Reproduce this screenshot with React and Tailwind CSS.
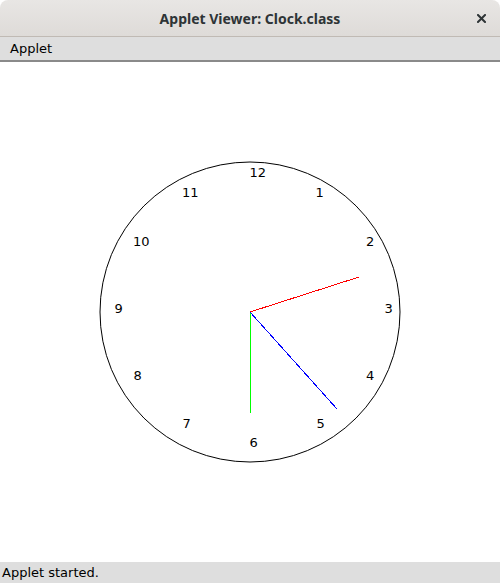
const NUMBERS = [
  { n: '12', x: 249.5, y: 115 },
  { n: '1', x: 315.5, y: 135 },
  { n: '11', x: 182, y: 135 },
  { n: '2', x: 366, y: 184 },
  { n: '10', x: 133, y: 184 },
  { n: '3', x: 384.5, y: 251 },
  { n: '9', x: 114.5, y: 251 },
  { n: '4', x: 366, y: 318 },
  { n: '8', x: 133.5, y: 318 },
  { n: '5', x: 316.5, y: 366 },
  { n: '7', x: 182.5, y: 366 },
  { n: '6', x: 249.5, y: 385 },
]

function ClockFace() {
  return (
    <svg width="500" height="500" viewBox="0 0 500 500" className="block">
      <circle cx="250" cy="250" r="150" fill="none" stroke="#000" strokeWidth="1" />
      {NUMBERS.map((d) => (
        <text
          key={d.n}
          x={d.x}
          y={d.y}
          fontFamily="'DejaVu Sans', sans-serif"
          fontSize="13"
          fill="#000"
        >
          {d.n}
        </text>
      ))}
      {/* hands */}
      <g shapeRendering="crispEdges">
        <line x1="250.5" y1="250" x2="250.5" y2="351" stroke="#00ff00" strokeWidth="1" />
        <line x1="250" y1="250" x2="337" y2="347" stroke="#0000ff" strokeWidth="1" />
        <line x1="250" y1="250" x2="359" y2="215" stroke="#ff0000" strokeWidth="1" />
      </g>
    </svg>
  )
}

export default function App() {
  return (
    <div className="w-[500px] h-[583px] flex flex-col bg-white overflow-hidden font-['DejaVu_Sans',sans-serif]">
      {/* title bar */}
      <div className="h-[37px] shrink-0 flex items-center justify-center relative rounded-t-[8px] bg-gradient-to-b from-[#e8e6e4] to-[#dedbd8] border-b border-[#c0bab4]">
        <span className="font-['Noto_Sans',sans-serif] font-bold text-[14px] text-[#2e3436]">Applet Viewer: Clock.class</span>
        <svg className="absolute right-[14px] top-[14px]" width="9" height="9" viewBox="0 0 9 9">
          <path d="M1 1 L8 8 M8 1 L1 8" stroke="#2e3436" strokeWidth="2" strokeLinecap="square" />
        </svg>
      </div>
      {/* menu bar */}
      <div className="h-[25px] shrink-0 flex items-center bg-[#dedede] border-b-2 border-[#8a8a8a] px-[10px]">
        <span className="text-[13px] text-black">Applet</span>
      </div>
      {/* applet canvas */}
      <div className="flex-1 bg-white">
        <ClockFace />
      </div>
      {/* status bar */}
      <div className="h-[21px] shrink-0 flex items-center bg-[#dedede] px-[2px]">
        <span className="text-[13px] text-black">Applet started.</span>
      </div>
    </div>
  )
}
